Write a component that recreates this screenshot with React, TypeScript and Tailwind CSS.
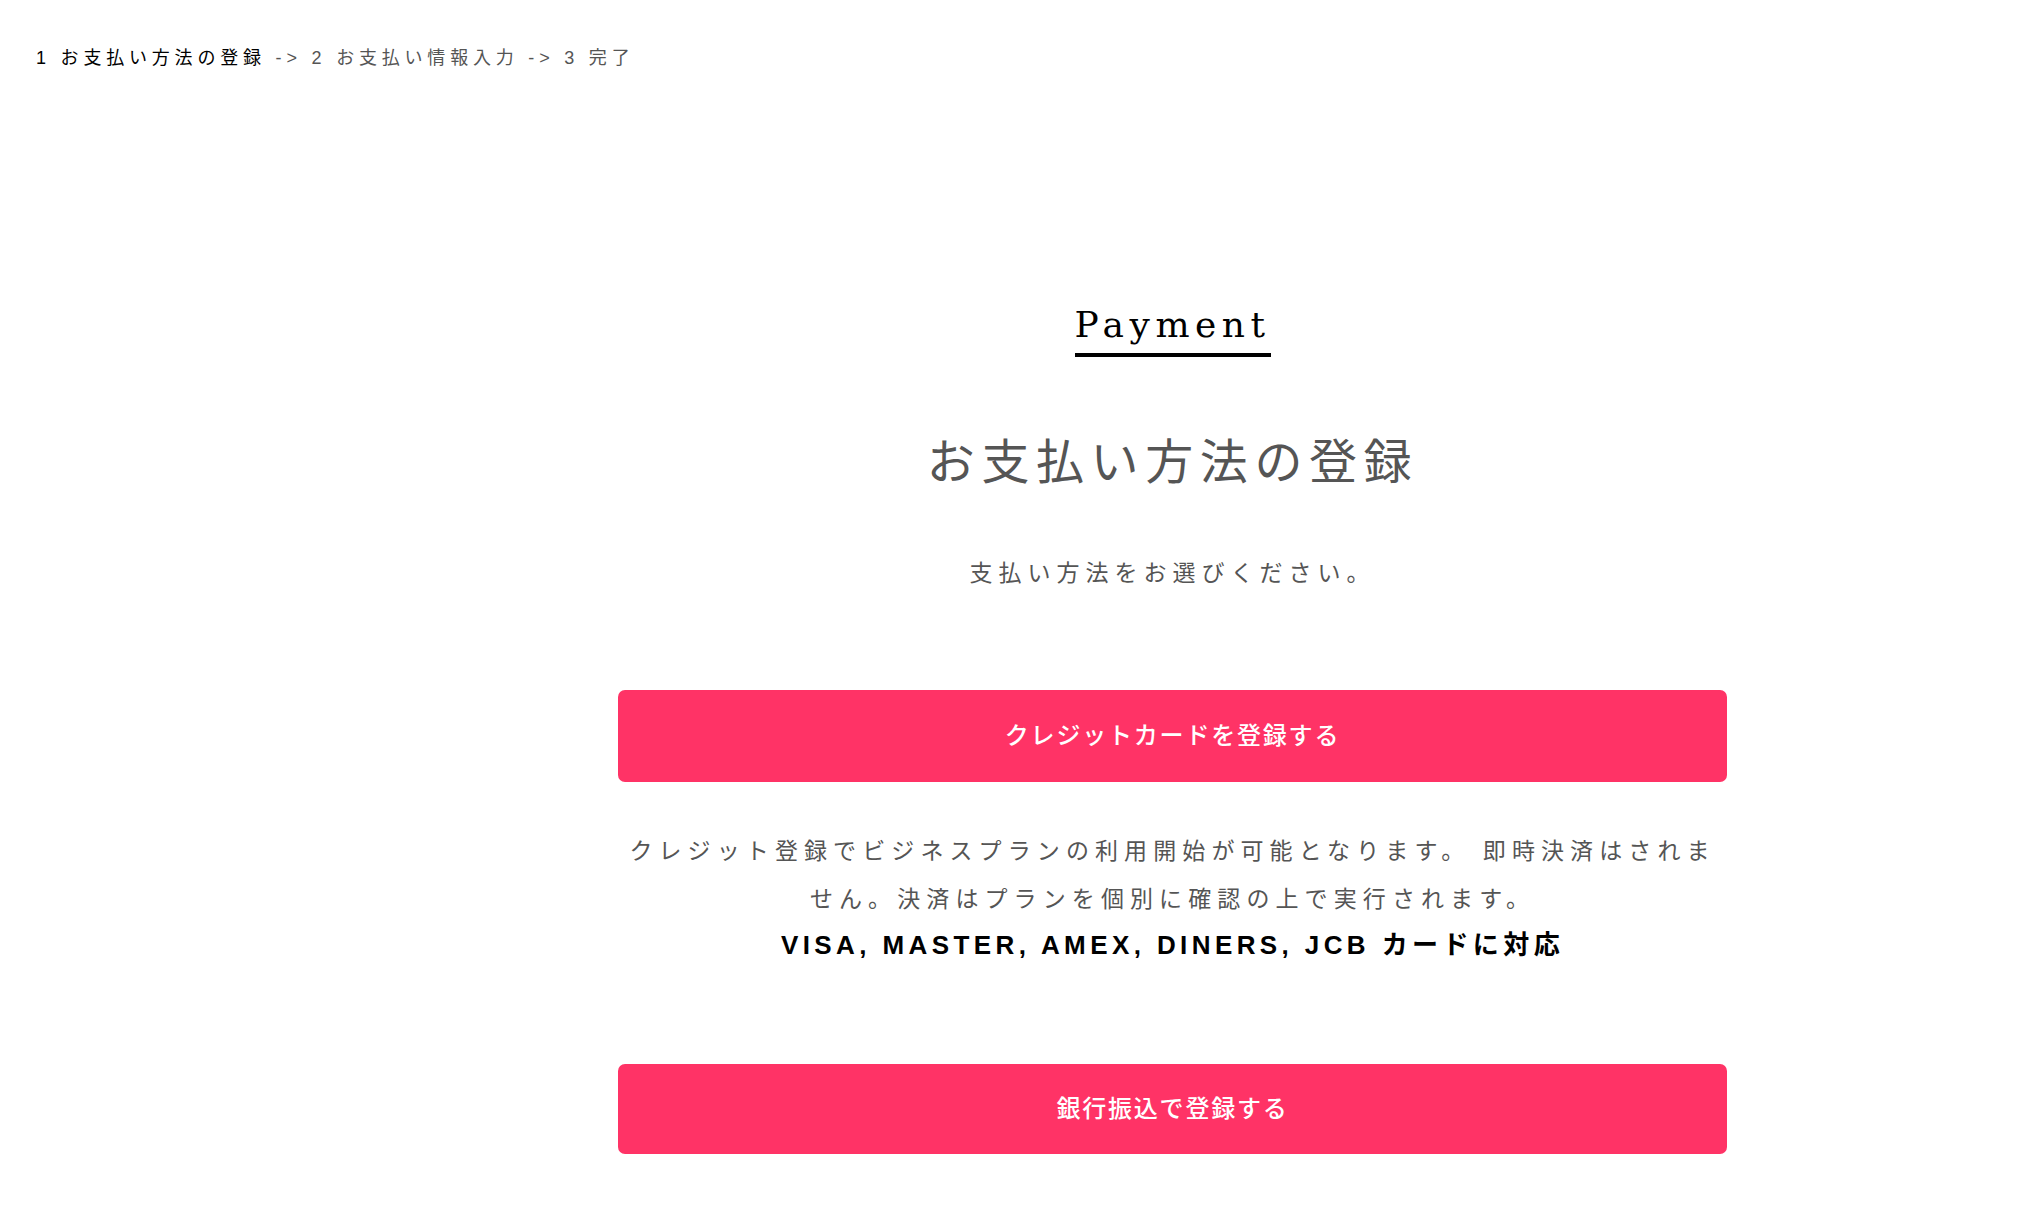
import React from "react";

export default function App() {
  return (
    <div className="w-full bg-white pb-[40px] font-['Liberation_Sans','Noto_Sans_CJK_JP',sans-serif]">
      <nav className="pl-[36px] pt-[46px] text-[18px] leading-[24px] tracking-[4.8px]">
        <span className="text-black">1 お支払い方法の登録</span>
        <span className="text-[#555]"> -&gt; 2 お支払い情報入力 -&gt; 3 完了</span>
      </nav>

      <div className="flex">
        <div className="w-[325px] shrink-0" />
        <main className="flex flex-1 flex-col items-center">
          <div className="flex w-[1109px] flex-col items-center">
            <h2 className="mt-[233px] inline-block border-b-4 border-black pb-[6px] font-['DejaVu_Serif',serif] text-[36px] leading-[44px] tracking-[5.5px] text-black">
              Payment
            </h2>

            <h1 className="mt-[76px] text-[48px] font-normal leading-[60px] tracking-[6.6px] text-[#555]">
              お支払い方法の登録
            </h1>

            <p className="mt-[64px] text-[23px] leading-[32px] tracking-[6px] text-[#555]">
              支払い方法をお選びください。
            </p>

            <button
              type="button"
              className="mt-[101px] flex h-[92px] w-full items-center justify-center rounded-[7px] bg-[#ff3366] text-[24px] font-medium tracking-[1.8px] text-white"
            >
              クレジットカードを登録する
            </button>

            <div className="mt-[45px] w-full text-center">
              <p className="text-[23px] leading-[48px] tracking-[6.1px] text-[#555]">
                クレジット登録でビジネスプランの利用開始が可能となります。 即時決済はされま
                <br />
                せん。決済はプランを個別に確認の上で実行されます。
              </p>
              <p className="text-[26px] font-bold leading-[44px] tracking-[4.4px] text-black">
                VISA, MASTER, AMEX, DINERS, JCB カードに対応
              </p>
            </div>

            <button
              type="button"
              className="mt-[97px] flex h-[90px] w-full items-center justify-center rounded-[7px] bg-[#ff3366] text-[24px] font-medium tracking-[1.8px] text-white"
            >
              銀行振込で登録する
            </button>
          </div>
        </main>
      </div>
    </div>
  );
}
